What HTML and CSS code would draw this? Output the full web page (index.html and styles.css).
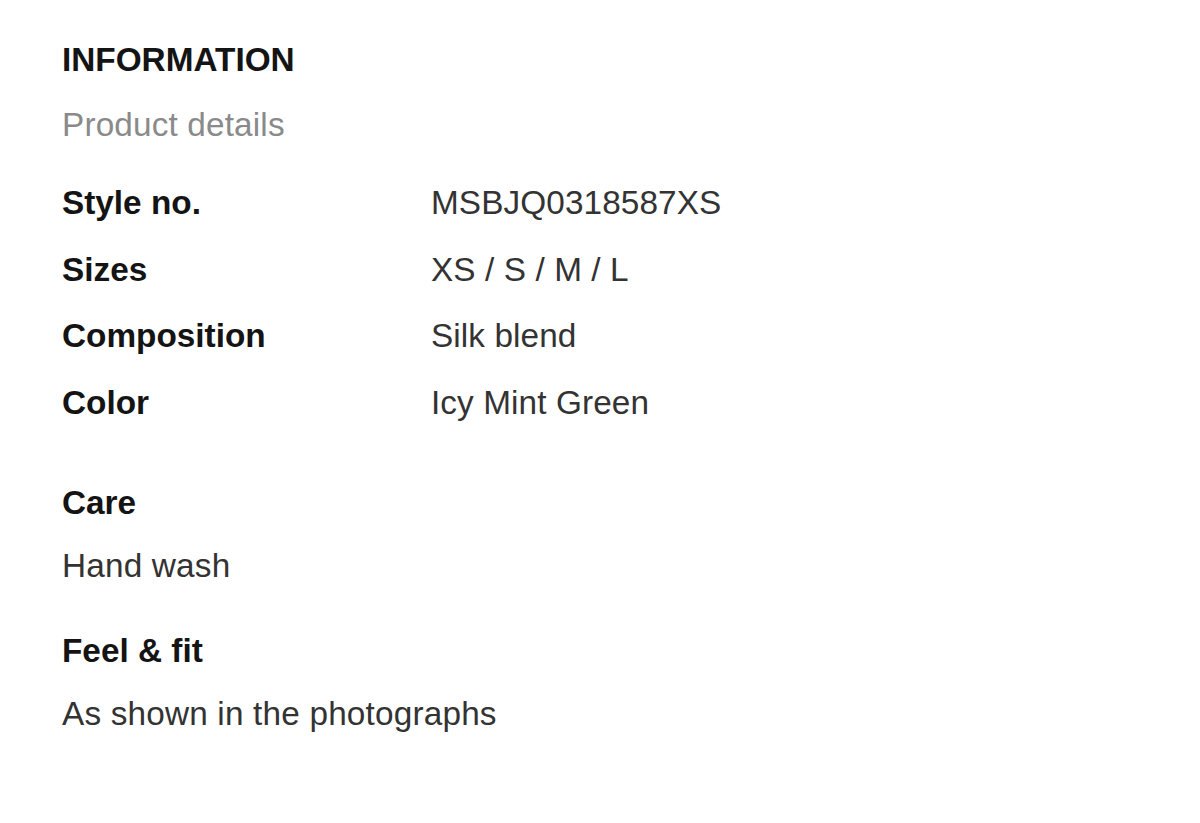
FILE: index.html
```html
<!DOCTYPE html>
<html lang="en">
<head>
<meta charset="utf-8">
<title>Information</title>
<link rel="stylesheet" href="styles.css">
</head>
<body>
<section class="info">
  <h2 class="info-title">INFORMATION</h2>
  <p class="info-subtitle">Product details</p>
  <dl class="specs">
    <dt>Style no.</dt><dd>MSBJQ0318587XS</dd>
    <dt>Sizes</dt><dd>XS / S / M / L</dd>
    <dt>Composition</dt><dd>Silk blend</dd>
    <dt>Color</dt><dd>Icy Mint Green</dd>
  </dl>
  <div class="block">
    <h3 class="block-title">Care</h3>
    <p class="block-text">Hand wash</p>
  </div>
  <div class="block">
    <h3 class="block-title">Feel &amp; fit</h3>
    <p class="block-text">As shown in the photographs</p>
  </div>
</section>
</body>
</html>
```

FILE: styles.css
```css
html, body {
  margin: 0;
  padding: 0;
  background: #ffffff;
}

body {
  font-family: "Liberation Sans", Arial, sans-serif;
  font-size: 33.33px;
  line-height: 40px;
  color: #333333;
}

.info {
  padding: 40px 62px 0 62px;
  display: flex;
  flex-direction: column;
}

.info-title {
  margin: 0 0 25px 0;
  font-size: 33.33px;
  font-weight: 700;
  color: #141414;
  line-height: 40px;
}

.info-subtitle {
  margin: 0 0 25px 0;
  color: #8a8a8a;
  letter-spacing: 0.15px;
}

.specs {
  margin: 0 0 46px 0;
  display: grid;
  grid-template-columns: 369px 1fr;
  line-height: 66.67px;
}

.specs dt {
  font-weight: 700;
  color: #141414;
}

.specs dd {
  margin: 0;
  color: #333333;
  letter-spacing: 0.1px;
}

.block {
  display: flex;
  flex-direction: column;
  gap: 23px;
  margin-bottom: 45px;
}

.block-title {
  margin: 0;
  font-size: 33.33px;
  font-weight: 700;
  color: #141414;
  line-height: 40px;
}

.block-text {
  margin: 0;
  color: #333333;
  letter-spacing: 0.18px;
}
```
